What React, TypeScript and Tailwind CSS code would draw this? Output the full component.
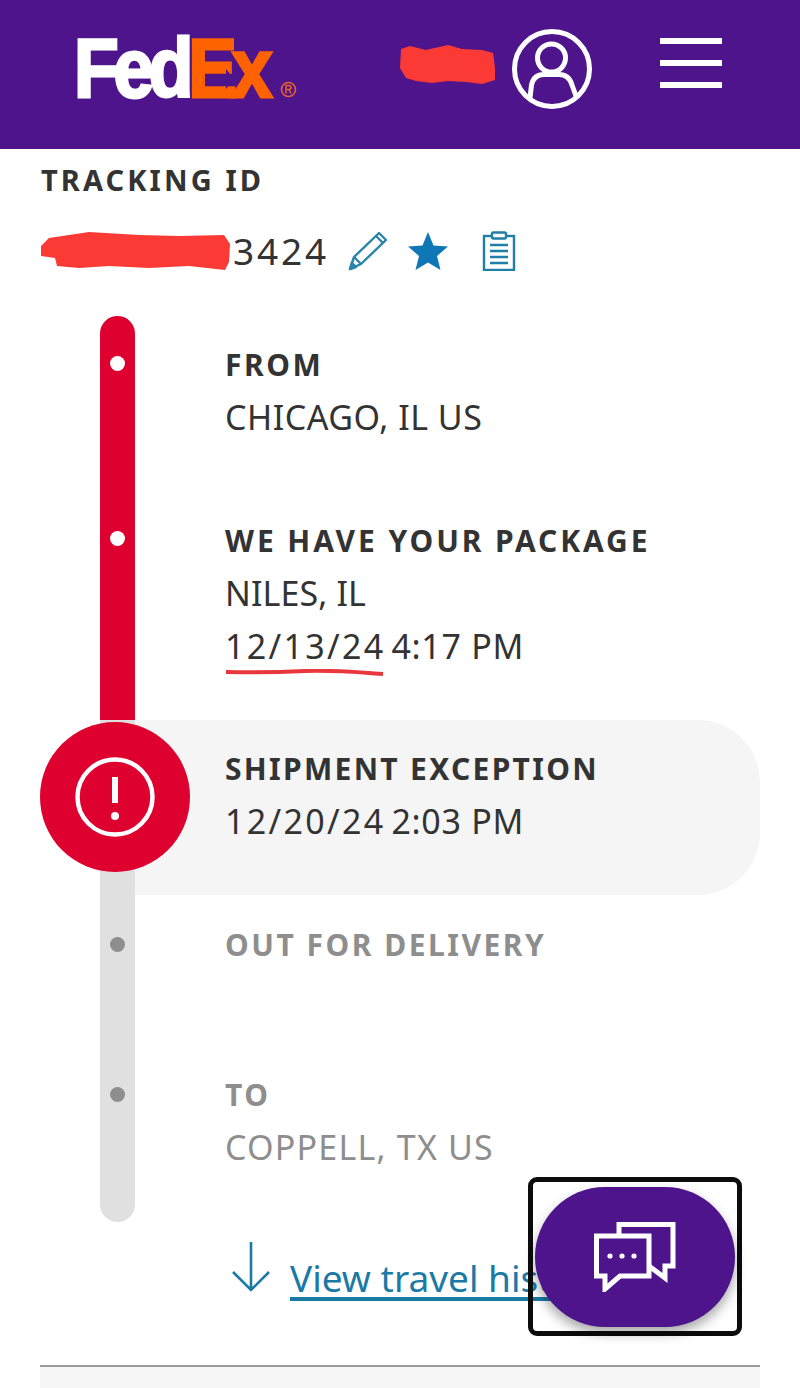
// FedEx tracking screen
const label = "text-[30px] leading-[53px] font-bold tracking-[2.5px]";
const value = "text-[34px] leading-[53px]";

function Scribble({ w, h, d }: { w: number; h: number; d: string }) {
  return (
    <svg width={w} height={h} viewBox={`0 0 ${w} ${h}`} className="shrink-0">
      <path d={d} fill="#fb3a36" />
    </svg>
  );
}

function Logo() {
  return (
    <div className="relative ml-[74px] -mt-[14px] w-[225px] h-[62px]">
      <div className="origin-left scale-x-[0.87] font-['Liberation_Sans',sans-serif] font-bold text-[84px] leading-[62px] tracking-[-6px] whitespace-nowrap">
        <span className="text-white [-webkit-text-stroke:3px_white]">Fed</span>
        <span className="text-[#ff6200] [-webkit-text-stroke:3px_#ff6200]">Ex</span>
      </div>
      {/* little arrow between the E and the x */}
      <svg width="12" height="22" viewBox="0 0 12 22" className="absolute left-[148px] top-[31px]">
        <path d="M0 8h4V1l8 10-8 10v-7H0z" fill="#4d148c" />
      </svg>
      <svg width="17" height="17" viewBox="0 0 17 17" className="absolute left-[206px] top-[44px]">
        <circle cx="8.5" cy="8.5" r="7" fill="none" stroke="#e8622a" strokeWidth="1.6" />
        <path d="M6 12.5v-8h3a2 2 0 0 1 0 4H6m3 0l2 4" fill="none" stroke="#e8622a" strokeWidth="1.5" />
      </svg>
    </div>
  );
}

function Header() {
  return (
    <header className="h-[149px] bg-[#4d148c] flex items-center">
      <Logo />
      <div className="ml-[99px] -mt-[20px]">
        <Scribble
          w={98}
          h={42}
          d="M3 5 L12 2 L28 6 L50 1 L64 5 L84 6 L95 9 L97 24 L97 36 L84 40 L68 38 L50 37 L34 39 L18 37 L8 34 L2 24 Z"
        />
      </div>
      <svg width="84" height="84" viewBox="0 0 84 84" className="ml-[14px] -mt-[12px]">
        <g fill="none" stroke="white" strokeWidth="5">
          <circle cx="42" cy="42" r="37.5" />
          <circle cx="41.5" cy="31" r="14" />
          <path d="M20 71 L21.5 58 C23 51 27 47.5 34 47.5 L49 47.5 C56 47.5 60 51 62 58 L66 69" />
        </g>
      </svg>
      <div className="ml-[66px] -mt-[23px] w-[62px] flex flex-col gap-[16px]">
        <div className="h-[6px] bg-white" />
        <div className="h-[6px] bg-white" />
        <div className="h-[6px] bg-white" />
      </div>
    </header>
  );
}

function TrackingHead() {
  return (
    <section className="h-[167px] pl-[41px] text-[#333]">
      <div className="text-[29px] leading-[40px] pt-[11px] h-[51px] font-bold tracking-[3.1px]">TRACKING ID</div>
      <div className="flex items-center mt-[28px] h-[46px]">
        <div className="-ml-[2px]">
          <Scribble
            w={192}
            h={42}
            d="M2 16 L10 8 L50 2 L100 5 L140 6 L185 5 L191 14 L190 32 L186 40 L150 36 L110 38 L70 36 L40 38 L18 36 L16 28 L2 26 Z"
          />
        </div>
        <span className="text-[37px] leading-[46px] tracking-[2.8px] ml-[2px]">3424</span>
        {/* pencil */}
        <svg width="40" height="40" viewBox="0 0 40 40" className="ml-[19px]" fill="none" stroke="#2a85ab" strokeWidth="2.4" strokeLinejoin="round">
          <path d="M2 38 L6 26 L31 2 L38 9 L13 33 Z" />
          <path d="M6 26 L13 33 M28 5 L35 12" />
          <path d="M2 38 L4 32 L8 36 Z" fill="#2a85ab" />
        </svg>
        {/* star */}
        <svg width="40" height="38" viewBox="0 0 40 38" className="ml-[20px]">
          <path d="M20 0 L25.5 13.5 L40 14.5 L29 24 L32.5 38 L20 30.5 L7.5 38 L11 24 L0 14.5 L14.5 13.5 Z" fill="#0f77b5" />
        </svg>
        {/* clipboard */}
        <svg width="34" height="40" viewBox="0 0 34 40" className="ml-[34px]" fill="none" stroke="#1f7fa6" strokeWidth="2.4">
          <rect x="2" y="5" width="30" height="34" />
          <rect x="10" y="1.5" width="14" height="6" rx="1.5" fill="white" />
          <path d="M8 14h18M8 20h18M8 26h18M8 32h18" />
        </svg>
      </div>
    </section>
  );
}

type RowProps = {
  height: string;
  pad: string;
  dotPad: string;
  rail: string;
  dot: string;
  tone: string;
  title: string;
  line?: string;
  lineClass?: string;
  top?: boolean;
  bottom?: boolean;
};

function Row({ height, pad, dotPad, rail, dot, tone, title, line, lineClass, top, bottom }: RowProps) {
  return (
    <div className={`flex ${height}`}>
      <div className={`ml-[100px] w-[35px] flex justify-center ${rail} ${dotPad} ${top ? "rounded-t-[18px]" : ""} ${bottom ? "rounded-b-[18px]" : ""}`}>
        <div className={`w-[15px] h-[15px] rounded-full ${dot}`} />
      </div>
      <div className={`ml-[90px] ${pad} ${tone}`}>
        <div className={label}>{title}</div>
        {line && <div className={`${value} ${lineClass}`}>{line}</div>}
      </div>
    </div>
  );
}

function DateTime({ date, time }: { date: string; time: string }) {
  return (
    <>
      <span className="tracking-[2.3px]">{date}</span>
      <span className="ml-[6px] tracking-[0.7px]">{time}</span>
    </>
  );
}

function Timeline() {
  return (
    <section className="relative">
      <Row
        height="h-[180px]"
        pad="pt-[22px]"
        dotPad="pt-[40px]"
        rail="bg-[#de002e]"
        dot="bg-white"
        tone="text-[#333]"
        title="FROM"
        line="CHICAGO, IL US"
        lineClass="tracking-[0.5px]"
        top
      />
      <div className="flex h-[224px]">
        <div className="ml-[100px] w-[35px] flex justify-center pt-[35px] bg-[#de002e]">
          <div className="w-[15px] h-[15px] rounded-full bg-white" />
        </div>
        <div className="ml-[90px] pt-[18px] text-[#333]">
          <div className="text-[30px] leading-[53px] font-bold tracking-[2.9px]">WE HAVE YOUR PACKAGE</div>
          <div className={`${value} tracking-[0.1px]`}>NILES, IL</div>
          <div className={`${value} relative whitespace-nowrap`}>
            <DateTime date="12/13/24" time="4:17 PM" />
            <svg width="160" height="8" viewBox="0 0 160 8" className="absolute left-0 top-[49px]">
              <path d="M1 3 C40 4 60 3 80 2 C110 1 130 3 158 5" fill="none" stroke="#e8383d" strokeWidth="4" />
            </svg>
          </div>
        </div>
      </div>

      {/* exception row */}
      <div className="flex h-[175px] ml-[100px] mr-[40px]">
        <div className="w-[35px] bg-[#e0e0e0]" />
        <div className="flex-1 bg-[#f5f5f5] rounded-r-[62px] pl-[90px] pt-[22px] text-[#333]">
          <div className="text-[30px] leading-[53px] font-bold tracking-[2.3px]">SHIPMENT EXCEPTION</div>
          <div className={`${value} whitespace-nowrap`}>
            <DateTime date="12/20/24" time="2:03 PM" />
          </div>
        </div>
      </div>
      <div className="absolute left-[40px] top-[406px] w-[150px] h-[150px] rounded-full bg-[#de002e] flex items-center justify-center">
        <svg width="80" height="80" viewBox="0 0 80 80" fill="none" stroke="white">
          <circle cx="40" cy="40" r="37.5" strokeWidth="4.5" />
          <path d="M40 20 V46" strokeWidth="6" />
          <circle cx="40" cy="59" r="4" fill="white" stroke="none" />
        </svg>
      </div>

      <Row
        height="h-[150px]"
        pad="pt-[23px]"
        dotPad="pt-[42px]"
        rail="bg-[#e0e0e0]"
        dot="bg-[#8e8e8e]"
        tone="text-[#8e8e8e]"
        title="OUT FOR DELIVERY"
      />
      <Row
        height="h-[177px]"
        pad="pt-[23px]"
        dotPad="pt-[42px]"
        rail="bg-[#e0e0e0]"
        dot="bg-[#8e8e8e]"
        tone="text-[#8e8e8e]"
        title="TO"
        line="COPPELL, TX US"
        lineClass="tracking-[1.2px]"
        bottom
      />
    </section>
  );
}

function Footer() {
  return (
    <>
      <div className="flex items-start h-[143px] pl-[231px] pt-[19px]">
        <svg width="40" height="52" viewBox="0 0 40 52" fill="none" stroke="#1b7aa5" strokeWidth="2.6">
          <path d="M20 1 V49 M2 31 L20 49 L38 31" />
        </svg>
        <a className="ml-[19px] mt-[12px] text-[37px] leading-[50px] text-[#1b7aa5] underline decoration-[4px] underline-offset-[5px] whitespace-nowrap">
          View travel history
        </a>
      </div>
      <div className="mx-[40px] h-[23px] border-t-2 border-[#9a9a9a] bg-[#f7f7f7]" />
    </>
  );
}

export default function App() {
  return (
    <div className="relative w-[800px] h-[1388px] overflow-hidden bg-white font-['Noto_Sans',sans-serif]">
      <Header />
      <TrackingHead />
      <Timeline />
      <Footer />

      {/* chat button with the black frame drawn over it */}
      <div className="absolute left-[528px] top-[1177px] w-[214px] h-[159px] border-[5px] border-[#0c0c0c] rounded-[9px]" />
      <button className="absolute left-[535px] top-[1187px] w-[200px] h-[140px] rounded-[70px] bg-[#4d148c] shadow-[0_6px_12px_rgba(0,0,0,0.35)] flex items-center justify-center">
        <svg width="82" height="70" viewBox="0 0 82 70" fill="none" stroke="white" strokeWidth="5" strokeLinejoin="miter">
          <path d="M25 14 V2.5 H79 V44 H71 V56 L55 44" />
          <path d="M2.5 14 H55 V54 H26 L11 67 V54 H2.5 Z" />
          <g fill="white" stroke="none">
            <circle cx="16" cy="34" r="2.6" />
            <circle cx="28" cy="34" r="2.6" />
            <circle cx="40" cy="34" r="2.6" />
          </g>
        </svg>
      </button>
    </div>
  );
}
